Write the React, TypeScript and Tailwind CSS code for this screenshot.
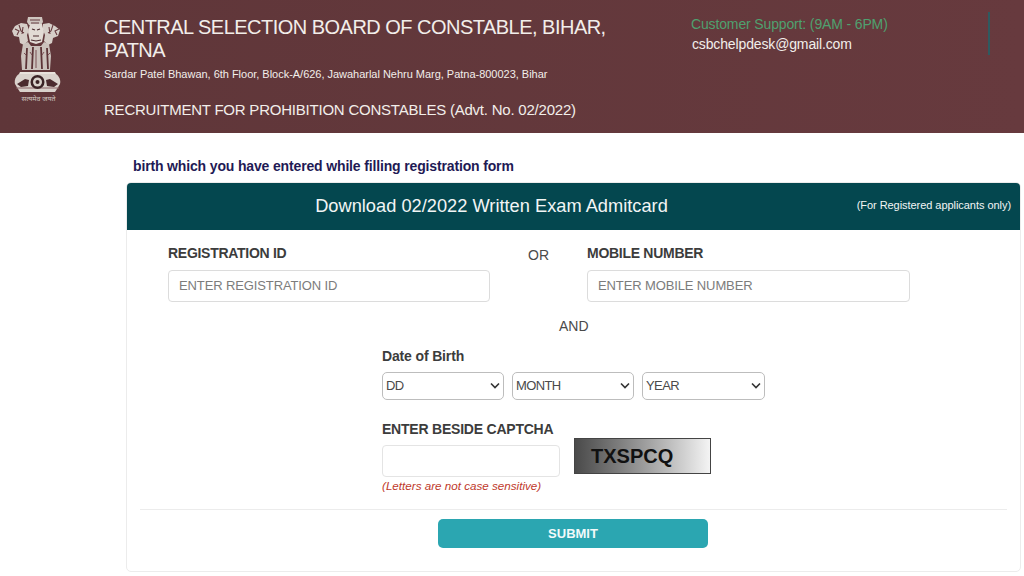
import React from "react";

const Emblem = () => (
  <svg width="54" height="92" viewBox="10 14 54 92" fill="none">
    {/* top of the capital */}
    <path d="M28 17h14l1 5-2 3h-12l-2-3z" fill="#cfc6c0" />
    <path d="M30 20h10M31 23h8" stroke="#653a3e" strokeWidth="1" />
    {/* side lions */}
    <path d="M27 24l-6-1-6 3-3 5 2 5 5 1 1 6 4 2 4-4-1-6 2-5z" fill="#d6cec8" />
    <path d="M43 24l6-1 6 3 5 4-2 6-5 2-1 5-4 2-4-4 1-6-2-5z" fill="#d6cec8" />
    <path d="M15 29l4 2-2 4M19 25l2 6 3 2M23 27l-1 7M59 29l-4 2 2 4M53 25l-2 6-3 2M49 27l1 7" stroke="#653a3e" strokeWidth="1.1" />
    {/* centre lion */}
    <path d="M30 24h12l2 8-2 10-6 2-6-2-2-10z" fill="#e2dbd5" />
    <path d="M32 29l3 1M40 29l-3 1M33 36h6M31 40l5 1 5-1" stroke="#4a2a2e" strokeWidth="1.2" />
    {/* bodies and legs */}
    <path d="M23 44l5-2 3 4h10l3-4 5 2 2 12-1 14H22l-1-14z" fill="#cbc2bc" />
    <path d="M27 48l-1 21M33 47l-1 22M41 47l1 22M47 48l1 21" stroke="#5c3437" strokeWidth="1.8" />
    <path d="M24 53l2 2M30 52l2 3M36 50v18M44 52l-2 3M50 53l-2 2" stroke="#7a5054" strokeWidth="1" />
    {/* abacus */}
    <path d="M20 72h35l1 2H19z" fill="#e8e2dc" />
    <path d="M19 74h37c3 2 5 6 4 10l-3 5-2 3H20l-2-3-3-5c-1-4 1-8 4-10z" fill="#d9d2cc" />
    <path d="M17 84l8-5 4 1-1 6-7 1zM58 84l-8-5-4 1 1 6 7 1z" fill="#4a2a2e" />
    <path d="M16 88h43" stroke="#8b6468" strokeWidth="1" />
    <circle cx="37.5" cy="82" r="7" fill="#3a2326" />
    <circle cx="37.5" cy="82" r="4.5" fill="#d9d2cc" />
    <circle cx="37.5" cy="82" r="2" fill="#3a2326" />
    <text x="38.5" y="101" textAnchor="middle" fontSize="7" fill="#cfc6c0" fontFamily="'Noto Sans','DejaVu Sans',sans-serif">
      सत्यमेव जयते
    </text>
  </svg>
);

const Field = ({ label, placeholder, width }: { label: string; placeholder: string; width: string }) => (
  <div className={width}>
    <label className="block text-[14px] leading-[20px] font-bold tracking-[-0.28px] text-[#3c3c3c] h-[27px]">{label}</label>
    <input
      placeholder={placeholder}
      className="w-full h-[32px] border border-[#dcdcdc] rounded-[4px] pl-[10px] pr-[11px] pb-[1px] text-[13px] tracking-[-0.12px] placeholder:text-[#7c7c7c] outline-none"
    />
  </div>
);

const DateSelect = ({ label, width }: { label: string; width: string }) => (
  <div className={`relative ${width}`}>
    <select className="appearance-none w-full h-[28px] border-[1.5px] border-[#bdbdbd] rounded-[5px] pl-[3px] text-[13px] tracking-[-0.6px] text-[#4a4a4a] bg-white">
      <option>{label}</option>
    </select>
    <svg className="absolute right-[4px] top-[10px] pointer-events-none" width="10" height="8" viewBox="0 0 10 8" fill="none">
      <path d="M1 1.5l4 4 4-4" stroke="#333" strokeWidth="1.6" />
    </svg>
  </div>
);

export default function App() {
  return (
    <div className="w-[1024px] h-[576px] overflow-hidden bg-white font-['Liberation_Sans',Arial,sans-serif]">
      <header className="h-[133px] bg-gradient-to-r from-[#5f3639] to-[#673a3e] flex text-[#f2eeea]">
        <div className="w-[104px] pl-[10px] pt-[14px] shrink-0">
          <Emblem />
        </div>
        <div className="w-[587px] pt-[16px] shrink-0">
          <h1 className="text-[20px] leading-[23px] tracking-[-0.52px] w-[530px]">
            CENTRAL SELECTION BOARD OF CONSTABLE, BIHAR, PATNA
          </h1>
          <p className="text-[11px] leading-[14px] tracking-[-0.02px] mt-[5px]">
            Sardar Patel Bhawan, 6th Floor, Block-A/626, Jawaharlal Nehru Marg, Patna-800023, Bihar
          </p>
          <p className="text-[15px] leading-[20px] tracking-[-0.22px] mt-[19px]">
            RECRUITMENT FOR PROHIBITION CONSTABLES (Advt. No. 02/2022)
          </p>
        </div>
        <div className="w-[297px] pt-[14px] shrink-0 text-[14px] leading-[20px] tracking-[-0.14px]">
          <p className="text-[#4fa06f]">Customer Support: (9AM - 6PM)</p>
          <p className="pl-[1px]">csbchelpdesk@gmail.com</p>
        </div>
        <div className="w-[2px] h-[43px] mt-[12px] bg-[#2f5a60]" />
      </header>

      <main className="pl-[126px] w-[1021px]">
        <p className="pl-[7px] pt-[24px] h-[50px] text-[14px] leading-[18px] font-bold tracking-[-0.15px] text-[#1f1a55]">
          birth which you have entered while filling registration form
        </p>
        <section className="h-[390px] -mt-[1px] border border-[#ececec] rounded-[5px] overflow-hidden">
          <div className="h-[47px] pb-[2px] bg-[#04474f] flex items-center text-[#f2f5f5]">
            <h2 className="w-[729px] text-center text-[18.25px]">Download 02/2022 Written Exam Admitcard</h2>
            <span className="text-[11px] tracking-[-0.05px] ml-auto mr-[9px] whitespace-nowrap">(For Registered applicants only)</span>
          </div>
          <div className="pt-[13px] flex flex-col items-stretch">
            <div className="flex pl-[41px]">
              <Field label="REGISTRATION ID" placeholder="ENTER REGISTRATION ID" width="w-[322px]" />
              <div className="w-[97px] pl-[38px] text-[14px] leading-[20px] text-[#4a4a4a] pt-[2px]">OR</div>
              <Field label="MOBILE NUMBER" placeholder="ENTER MOBILE NUMBER" width="w-[323px]" />
            </div>
            <div className="mt-[14px] pl-[432px] text-[14px] leading-[20px] text-[#4a4a4a]">AND</div>
            <div className="pl-[255px] mt-[10px]">
              <p className="text-[14px] leading-[20px] font-bold tracking-[-0.15px] text-[#3c3c3c]">Date of Birth</p>
              <div className="flex gap-[8px] mt-[6px]">
                <DateSelect label="DD" width="w-[122px]" />
                <DateSelect label="MONTH" width="w-[122px]" />
                <DateSelect label="YEAR" width="w-[123px]" />
              </div>
              <p className="text-[14px] leading-[20px] font-bold tracking-[-0.22px] text-[#3c3c3c] mt-[19px]">ENTER BESIDE CAPTCHA</p>
              <div className="flex">
                <div className="w-[178px] pt-[6px]">
                  <input className="w-full h-[32px] border border-[#e4e4e4] rounded-[4px] outline-none" />
                  <p className="text-[11.65px] leading-[14px] italic text-[#c0392b] mt-[2px]">(Letters are not case sensitive)</p>
                </div>
                <div className="ml-[14px] w-[137px] h-[36px] border border-[#444] bg-gradient-to-r from-[#4a4a4a] to-[#f4f4f4] pl-[16px] text-[20px] leading-[34px] font-bold text-[#111] mt-[-1px]">
                  TXSPCQ
                </div>
              </div>
            </div>
            <div className="mx-[13px] mt-[16px] border-t border-[#ececec]" />
            <div className="flex justify-center mt-[9px]">
              <button className="ml-[-1px] w-[270px] h-[29px] rounded-[5px] bg-[#2ba6b1] text-[#f2fafa] text-[13px] font-bold">
                SUBMIT
              </button>
            </div>
          </div>
        </section>
      </main>
    </div>
  );
}
